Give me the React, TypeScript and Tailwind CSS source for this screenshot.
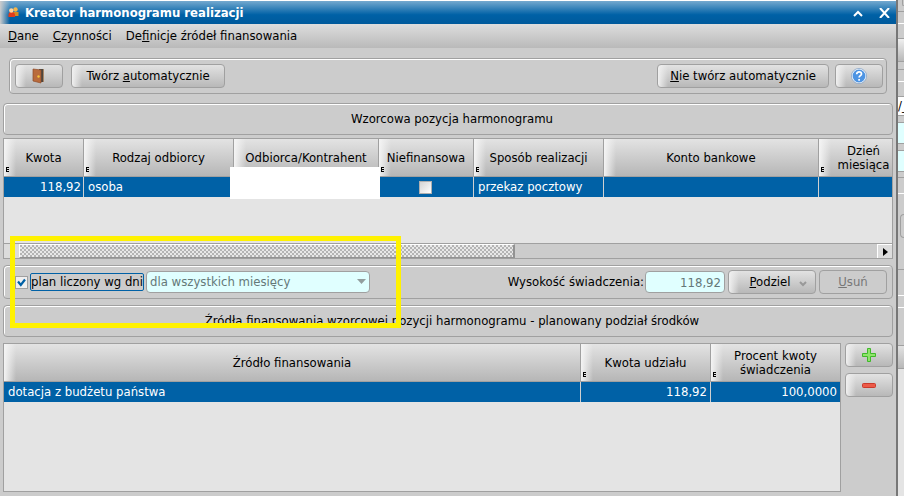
import React from 'react';

type Column = { label: React.ReactNode; width?: string; editable?: boolean };

const itemColumns: Column[] = [
  { label: 'Kwota', width: 'w-[79px]', editable: true },
  { label: 'Rodzaj odbiorcy', width: 'w-[150px]', editable: true },
  { label: 'Odbiorca/Kontrahent', width: 'w-[145px]' },
  { label: 'Niefinansowa', width: 'w-[95px]', editable: true },
  { label: 'Sposób realizacji', width: 'w-[130px]', editable: true },
  { label: 'Konto bankowe', width: 'w-[215px]' },
  { label: <div className="pl-4">Dzień<br />miesiąca</div>, editable: true },
];

const sourceColumns: Column[] = [
  { label: 'Źródło finansowania' },
  { label: 'Kwota udziału', width: 'w-[130px]', editable: true },
  { label: <>Procent kwoty<br />świadczenia</>, width: 'w-[130px]', editable: true },
];

const HeaderRow = ({ columns }: { columns: Column[] }) => (
  <thead>
    <tr className="h-[38px]">
      {columns.map((col, i) => (
        <th
          key={i}
          className={`relative border-b border-[#a0a0a0] bg-[linear-gradient(to_right,#f4f4f4,#f4f4f400_12px),linear-gradient(#e3e3e3,#b6b6b6)] p-0 text-center align-middle font-normal leading-[14px] ${i > 0 ? 'border-l' : ''} ${col.width ?? ''}`}
        >
          {col.label}
          {col.editable && <EditMark />}
        </th>
      ))}
    </tr>
  </thead>
);

const EditMark = () => (
  <svg className="absolute bottom-1 left-0.5" width="3" height="5" viewBox="0 0 3 5" shapeRendering="crispEdges">
    <path d="M0 0h3v1h-2v1h2v1h-2v1h2v1h-3z" fill="#000" />
  </svg>
);

const Panel = ({ className = '', children }: { className?: string; children: React.ReactNode }) => (
  <div className={`flex items-center rounded border border-[#a0a0a0] shadow-[inset_1px_1px_0_#fff] ${className}`}>{children}</div>
);

const Button = ({ className = '', ...props }: React.ComponentProps<'button'>) => (
  <button
    type="button"
    className={`flex h-6 shrink-0 items-center justify-center rounded border border-[#a0a0a0] bg-[linear-gradient(to_right,#f0f0f0,#f0f0f000_10px),linear-gradient(#e2e2e2,#b8b8b8)] ${className}`}
    {...props}
  />
);

const App: React.FC = () => {
  return (
    <div className="flex min-h-screen bg-[#cccccc] font-['DejaVu_Sans_Condensed','DejaVu_Sans',sans-serif] text-[13px] leading-4 text-black">
      <main className="relative flex min-w-0 flex-1 flex-col border-r-2 border-[#777777]">
        <header className="flex h-6 items-center border-t border-white bg-[linear-gradient(to_right,#cccccc,#cccccc00_10px),linear-gradient(#74a9cf,#0061a6_60%,#005a9c)] pl-2 text-white">
          <PeopleIcon />
          <h1 className="ml-1.5 flex-1 whitespace-nowrap font-bold">Kreator harmonogramu realizacji</h1>
          <button type="button" aria-label="Zwiń" className="mr-4">
            <svg width="10" height="10" viewBox="0 0 10 10" fill="none" stroke="#fff" strokeWidth="2">
              <path d="M1 8L5 4l4 4" />
            </svg>
          </button>
          <button type="button" aria-label="Zamknij" className="mr-1.5">
            <svg width="11" height="10" viewBox="0 0 11 10" stroke="#fff" strokeWidth="2">
              <path d="M1 0l9 10M10 0L1 10" />
            </svg>
          </button>
        </header>

        <nav className="flex h-6 items-center gap-3.5 bg-linear-to-b from-[#dedede] to-[#b9b9b9] pl-2">
          <button type="button"><u>D</u>ane</button>
          <button type="button"><u>C</u>zynności</button>
          <button type="button">De<u>f</u>inicje źródeł finansowania</button>
        </nav>

        <div className="flex flex-1 flex-col px-[3px] pb-1">
          <Panel className="mx-1.5 mt-2.5 h-9 gap-1.5 pl-[5px] pr-[3px]">
            <Button aria-label="Zamknij okno" className="w-12"><DoorIcon /></Button>
            <Button className="ml-0.5 w-[154px]"><span>Twórz <u>a</u>utomatycznie</span></Button>
            <Button className="ml-auto w-[172px]"><span><u>N</u>ie twórz automatycznie</span></Button>
            <Button aria-label="Pomoc" className="w-12"><HelpIcon /></Button>
          </Panel>

          <Panel className="mt-[9px] h-8 justify-center"><h2 className="pl-2">Wzorcowa pozycja harmonogramu</h2></Panel>

          <div className="mt-[3px] border border-[#a0a0a0] bg-[#e4e4e4]">
            <div className="min-h-[104px]">
              <table className="w-full table-fixed border-separate border-spacing-0">
                <HeaderRow columns={itemColumns} />
                <tbody>
                  <tr className="h-5 bg-[#0061a6] text-white">
                    <td className="pr-0.5 text-right">118,92</td>
                    <td className="border-l border-[#d0d0d0] pl-1">osoba</td>
                    <td className="relative"><div className="absolute -bottom-0.5 -left-[3px] -right-0.5 -top-2.5 bg-white" /></td>
                    <td>
                      <input type="checkbox" aria-label="Niefinansowa" className="mx-auto block size-[13px] appearance-none border border-[#b0b0b0] bg-linear-to-br from-[#d4d4d4] to-white" />
                    </td>
                    <td className="border-l border-[#d0d0d0] pl-1">przekaz pocztowy</td>
                    <td className="border-l border-[#d0d0d0]" />
                    <td className="border-l border-[#d0d0d0]" />
                  </tr>
                </tbody>
              </table>
            </div>
            <ScrollBar />
          </div>

          <Panel className="mt-1.5 h-[34px] px-[5px]">
            <div className="relative ml-1.5">
              <input id="by-days" type="checkbox" defaultChecked className="peer block size-[13px] appearance-none border border-[#a0a0a0] bg-[#f0f0f0]" />
              <svg className="pointer-events-none absolute inset-0 hidden peer-checked:block" width="13" height="13" viewBox="0 0 13 13" fill="none" stroke="#0061a6" strokeWidth="2.2">
                <path d="M3 5.500L5.800 9 10 3.500" />
              </svg>
            </div>
            <label htmlFor="by-days" className="ml-0.5 flex h-[18px] items-center whitespace-nowrap rounded-xs border border-[#0061a6]">plan liczony wg dni</label>
            <div className="relative ml-0.5">
              <select aria-label="Miesiące" disabled className="block h-[22px] w-[224px] appearance-none rounded border border-[#a0a0a0] bg-[#e0ffff] pl-[3px] text-[#657878] opacity-100">
                <option>dla wszystkich miesięcy</option>
              </select>
              <svg className="pointer-events-none absolute right-1 top-2" width="9" height="5" viewBox="0 0 9 5"><path d="M0 0h9L4.500 5z" fill="#929e9e" /></svg>
            </div>
            <label htmlFor="benefit" className="ml-auto whitespace-nowrap">Wysokość świadczenia:</label>
            <input id="benefit" disabled defaultValue="118,92" className="ml-px h-[22px] w-20 rounded border border-[#a0a0a0] bg-[#e0ffff] pr-[3px] text-right text-[#657878]" />
            <Button className="ml-[3px] w-22"><span><u>P</u>odziel</span>
              <svg className="-mr-3 ml-2 mt-1" width="8" height="6" viewBox="0 0 8 6" fill="none" stroke="#999" strokeWidth="2"><path d="M1 1l3 3 3-3" /></svg>
            </Button>
            <button type="button" disabled className="ml-[3px] h-6 w-17 rounded border border-[#a0a0a0] text-[#777777]"><u>U</u>suń</button>
          </Panel>

          <Panel className="mt-1.5 h-8 justify-center"><h2 className="pl-2">Źródła finansowania wzorcowej pozycji harmonogramu - planowany podział środków</h2></Panel>

          <div className="mt-1.5 flex flex-1 gap-1">
            <div className="flex-1 border border-[#a0a0a0] bg-[#e4e4e4]">
              <table className="w-full table-fixed border-separate border-spacing-0">
                <HeaderRow columns={sourceColumns} />
                <tbody>
                  <tr className="h-5 bg-[#0061a6] text-white">
                    <td className="pl-1">dotacja z budżetu państwa</td>
                    <td className="border-l border-[#d0d0d0] pr-[3px] text-right">118,92</td>
                    <td className="border-l border-[#d0d0d0] pr-[3px] text-right">100,0000</td>
                  </tr>
                </tbody>
              </table>
            </div>
            <div className="flex flex-col gap-1.5">
              <Button aria-label="Dodaj" className="w-12">
                <svg width="14" height="14" viewBox="0 0 14 14"><path d="M5.500 .5h3v5h5v3h-5v5h-3v-5h-5v-3h5z" fill="#8ee46a" stroke="#3fb82a" /></svg>
              </Button>
              <Button aria-label="Odejmij" className="w-12">
                <svg width="14" height="5" viewBox="0 0 14 5"><rect x=".5" y=".5" width="13" height="4" rx="1" fill="#ec5a48" stroke="#c93a2c" /></svg>
              </Button>
            </div>
          </div>
        </div>

        {/* highlight over the day-based plan option */}
        <div className="pointer-events-none absolute left-2.5 top-[236px] h-[92px] w-[391px] border-[5px] border-[#fff200]" />
      </main>
      <WindowBehind />
    </div>
  );
};

// visible edge of the parent window
const WindowBehind = () => (
  <aside className="flex w-1.5 flex-col overflow-hidden bg-[#cccccc]">
    <div className="ml-1 h-1.5 rounded-bl border-b border-l border-[#a0a0a0]" />
    <div className="h-1.5 border-b border-[#a0a0a0]" />
    <div className="h-3 border-b border-white" />
    <div className="mt-3.5 h-6 border-y border-[#a0a0a0] bg-linear-to-b from-[#f0f0f0] to-[#b8b8b8]" />
    <div className="h-2 border-b border-[#a0a0a0]" />
    <div className="h-3 border-b border-white" />
    <div className="mt-3.5 h-5 overflow-hidden border-y border-[#a0a0a0] bg-white leading-[18px]">/_</div>
    <div className="mt-1.5 h-[22px] border-y border-[#a0a0a0] bg-[#e0ffff]" />
    <div className="mt-1.5 h-[22px] border-y border-[#a0a0a0] bg-[#e0ffff]" />
    <div className="h-1.5 border-b border-[#a0a0a0]" />
    <div className="h-4 border-b border-white" />
    <div className="ml-0.5 mt-5 h-6 rounded-l border border-r-0 border-[#a0a0a0]" />
    <div className="h-8 border-b border-[#a0a0a0]" />
    <div className="h-[26px] border-b border-white" />
    <div className="h-3 border-b border-white" />
    <div className="mt-[37px] h-6 border-y border-[#a0a0a0] bg-linear-to-b from-[#e2e2e2] to-[#b8b8b8]" />
    <div className="flex-1 bg-[#e4e4e4]" />
  </aside>
);

const ScrollBar = () => (
  <div className="flex h-[15px] border-t border-[#a0a0a0]">
    <button type="button" aria-label="Przewiń w lewo" className="flex w-[15px] items-center justify-center bg-[#dcdcdc]">
      <svg width="4" height="8" viewBox="0 0 4 8"><path d="M4 0v8L0 4z" /></svg>
    </button>
    <div className="flex-[494] border border-r-2 border-[#929292] border-t-white border-l-white bg-[#b8b8b8] bg-[conic-gradient(#e8e8e8_25%,#b4b4b4_0_50%,#e8e8e8_0_75%,#b4b4b4_0)] bg-size-[4px_4px]" />
    <div className="flex-[363] bg-[#cccccc]" />
    <button type="button" aria-label="Przewiń w prawo" className="flex w-[15px] items-center justify-center border-l border-t border-white bg-[#dcdcdc]">
      <svg width="5" height="8" viewBox="0 0 5 8"><path d="M0 0v8l5-4z" /></svg>
    </button>
  </div>
);

const PeopleIcon = () => (
  <svg width="11" height="11" viewBox="0 0 11 11">
    <path d="M5 5h5.500v4H5z" fill="#d88a20" />
    <circle cx="7.500" cy="2.500" r="2.200" fill="#f5b64a" />
    <path d="M.5 10c-.5-4 1-5 3-5s4 1 3.500 5z" fill="#e03c1c" />
    <circle cx="3.300" cy="3.500" r="2.200" fill="#ffd29a" />
  </svg>
);

const DoorIcon = () => (
  <svg width="14" height="16" viewBox="0 0 14 16">
    <path d="M7 1h5v13H7z" fill="#4d4740" />
    <path d="M11 1h1v13h-1z" fill="#a88768" />
    <path d="M1 1l8 1v13l-8-2z" fill="#b96b3c" stroke="#8e4a28" strokeWidth=".7" />
    <circle cx="6.500" cy="8.500" r="1.200" fill="#f5c43a" />
  </svg>
);

const HelpIcon = () => (
  <svg width="16" height="16" viewBox="0 0 16 16">
    <circle cx="8" cy="8" r="7" fill="#4d94e3" stroke="#eef4fb" strokeWidth="1.200" />
    <circle cx="8" cy="8" r="7.600" fill="none" stroke="#7f9fc6" strokeWidth=".7" />
    <path d="M5.700 6.200C5.700 3 10.500 3.200 10.500 6c0 1.600-2.400 1.700-2.400 3.500M8.100 11v1.700" fill="none" stroke="#fff" strokeWidth="1.700" />
  </svg>
);

export default App;
